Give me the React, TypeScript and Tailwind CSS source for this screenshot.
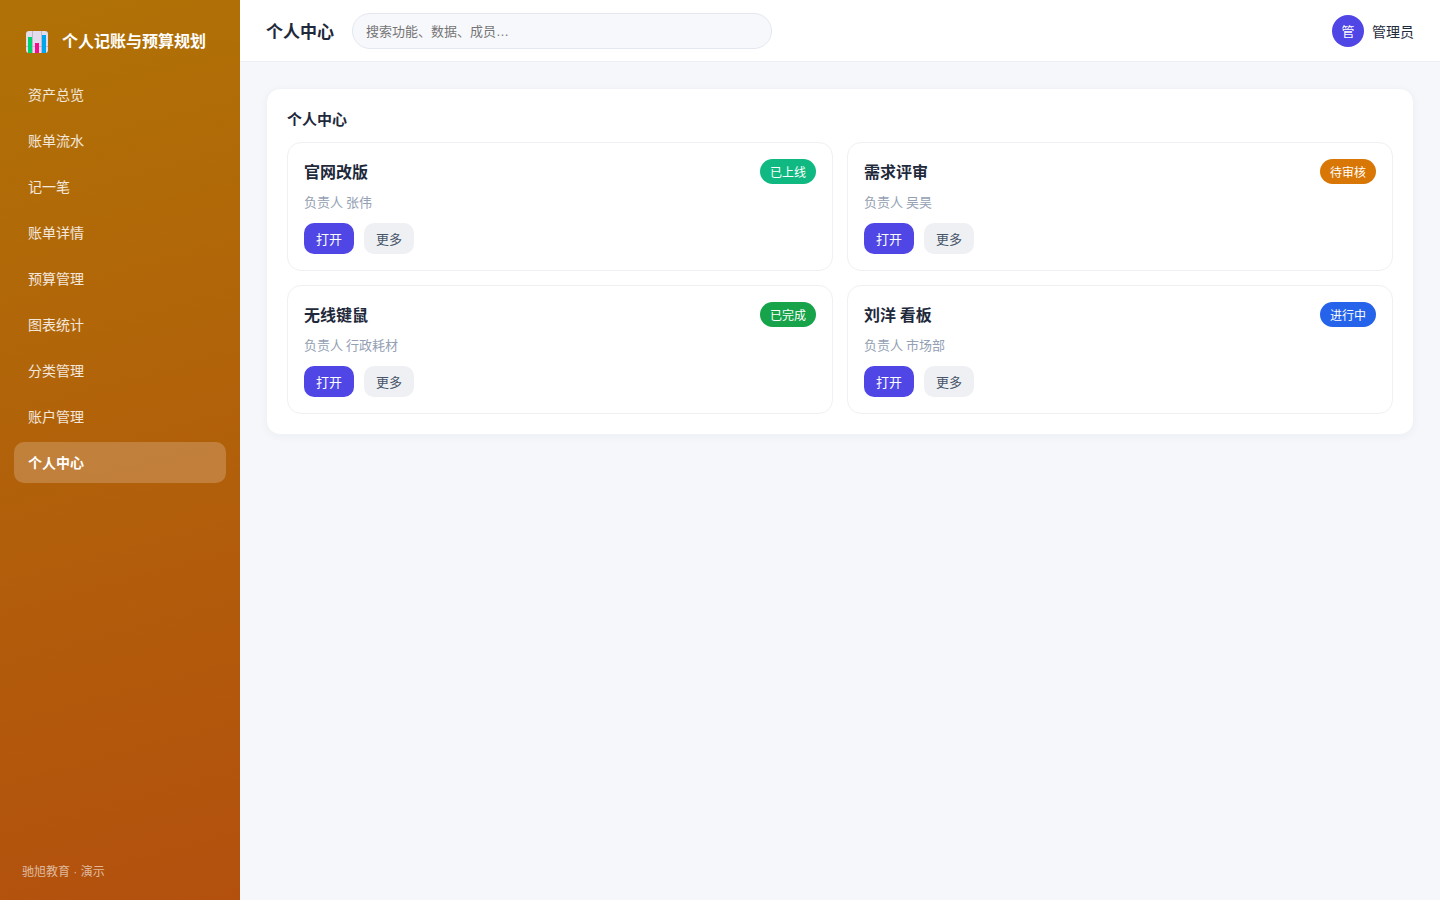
import { useState } from 'react';
import clsx from 'clsx';

const navItems = ['资产总览', '账单流水', '记一笔', '账单详情', '预算管理', '图表统计', '分类管理', '账户管理', '个人中心'];

const projects = [
    { title: '官网改版', owner: '张伟', status: '已上线', color: 'bg-[#10b981]' },
    { title: '需求评审', owner: '吴昊', status: '待审核', color: 'bg-[#d97706]' },
    { title: '无线键鼠', owner: '行政耗材', status: '已完成', color: 'bg-[#16a34a]' },
    { title: '刘洋 看板', owner: '市场部', status: '进行中', color: 'bg-[#2563eb]' },
];

function ChartLogo() {
    return (
        <svg className="size-[22px] shrink-0" viewBox="0 0 22 22" aria-hidden="true">
            <rect width="22" height="22" rx="3" fill="#e3dcec" />
            <path d="M6.5 0v22M15.5 0v22M0 15.5h22" stroke="#b9afc4" strokeWidth="0.8" />
            <rect x="2" y="6" width="4" height="16" fill="#00d26a" />
            <rect x="9" y="12" width="4" height="10" fill="#f70a8d" />
            <rect x="16" y="4" width="4" height="18" fill="#00a6ed" />
        </svg>
    );
}

function Sidebar({ active, onSelect }: { active: string, onSelect: (item: string) => void }) {
    return (
        <aside className="flex w-60 shrink-0 flex-col bg-[linear-gradient(165deg,#b07206,#b3500e)] px-[14px] pt-[22px] pb-5 text-white">
            <div className="mb-3 flex h-10 items-center gap-[14px] px-3">
                <ChartLogo />
                <span className="pb-1 text-base font-bold whitespace-nowrap">个人记账与预算规划</span>
            </div>

            <nav className="flex flex-col gap-[5px]">
                {navItems.map((item) => (
                    <a
                        key={item}
                        href="#"
                        onClick={() => onSelect(item)}
                        className={clsx(
                            'rounded-[10px] px-[14px] py-[10px] text-sm leading-[21px]',
                            item === active ? 'bg-white/20 font-bold text-white' : 'text-white/85'
                        )}
                    >
                        {item}
                    </a>
                ))}
            </nav>

            <div className="mt-auto px-2 font-['Liberation_Sans','Noto_Sans_CJK_SC',sans-serif] text-xs leading-4 text-white/60">驰旭教育 · 演示</div>
        </aside>
    );
}

function ProjectCard({ title, owner, status, color }: { title: string, owner: string, status: string, color: string }) {
    return (
        <article className="rounded-[14px] border border-[#eef0f3] p-4">
            <div className="flex items-center justify-between">
                <h3 className="text-base leading-[25px] font-bold">{title}</h3>
                <span className={clsx('rounded-full px-[10px] text-xs leading-[25px] text-white', color)}>{status}</span>
            </div>
            <p className="mt-2 text-[13px] leading-[19px] text-[#94a0b3]">负责人 {owner}</p>
            <div className="mt-3 flex gap-[10px]">
                <button type="button" className="rounded-[10px] bg-[#4f46e5] px-3 text-[13px] leading-[31px] text-white">打开</button>
                <button type="button" className="rounded-[10px] bg-[#eef0f4] px-3 text-[13px] leading-[31px] text-[#475569]">更多</button>
            </div>
        </article>
    );
}

export default function App() {
    const [active, setActive] = useState('个人中心');

    return (
        <div className="flex min-h-screen bg-[#f5f7fb] font-['Noto_Sans_CJK_SC',sans-serif] text-[#1e293b]">
            <Sidebar active={active} onSelect={setActive} />

            <div className="min-w-0 flex-1">
                <header className="flex items-center gap-[18px] border-b border-[#eceef3] bg-white px-[26px] pt-[13px] pb-3">
                    <h1 className="text-[17px] leading-6 font-bold whitespace-nowrap">{active}</h1>
                    <input
                        type="search"
                        aria-label="搜索"
                        placeholder="搜索功能、数据、成员…"
                        className="h-9 w-full max-w-[420px] rounded-full border border-[#e4e7ef] bg-[#f7f8fc] px-[13px] font-['Liberation_Sans','Noto_Sans_CJK_SC',sans-serif] text-[13px] outline-none placeholder:text-[#757575]"
                    />
                    <div className="ml-auto flex items-center gap-2 text-sm whitespace-nowrap">
                        <span className="flex size-8 items-center justify-center rounded-full bg-[#4f46e5] text-[13px] text-white">管</span>
                        <span>管理员</span>
                    </div>
                </header>

                <main className="p-[26px]">
                    <section className="rounded-[14px] border border-[#f0f2f6] bg-white p-5 shadow-[0_2px_8px_rgba(30,41,59,0.04)]">
                        <h2 className="mb-[14px] text-[15px] leading-[19px] font-bold">{active}</h2>
                        <div className="grid grid-cols-2 gap-[14px]">
                            {projects.map((project) => (
                                <ProjectCard key={project.title} {...project} />
                            ))}
                        </div>
                    </section>
                </main>
            </div>
        </div>
    );
}
